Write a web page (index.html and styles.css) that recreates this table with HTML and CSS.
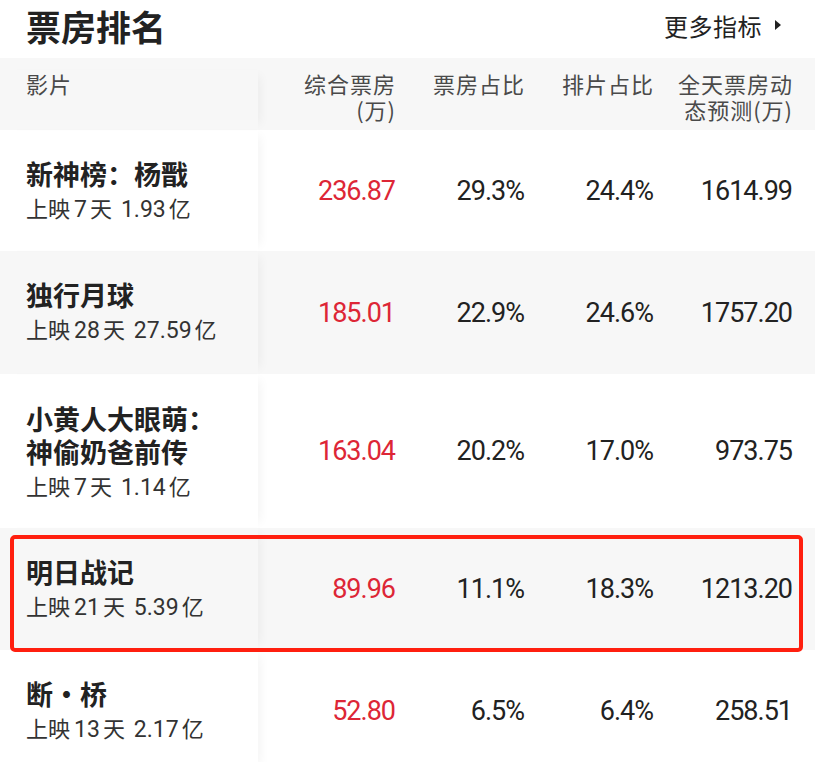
FILE: index.html
```html
<!DOCTYPE html>
<html lang="zh-CN">
<head>
<meta charset="utf-8">
<title>票房排名</title>
<link rel="stylesheet" href="styles.css">
</head>
<body>
<div class="page">
  <header class="top">
    <h1 class="title">票房排名</h1>
    <a class="more">更多指标<svg class="tri" width="8" height="12" viewBox="0 0 8 12"><path d="M1 1 L7 6 L1 11 Z" fill="#222"/></svg></a>
  </header>
  <div class="table">
    <div class="row head">
      <div class="cell name-col"><span class="hl">影片</span></div>
      <div class="cell num"><span class="hl">综合票房</span><span class="hl">(万)</span></div>
      <div class="cell num"><span class="hl">票房占比</span></div>
      <div class="cell num"><span class="hl">排片占比</span></div>
      <div class="cell num"><span class="hl">全天票房动</span><span class="hl">态预测(万)</span></div>
    </div>
    <div class="row">
      <div class="cell name-col"><div class="name">新神榜：杨戬</div><div class="sub">上映<span class="d">7</span>天 <span class="d">1.93</span>亿</div></div>
      <div class="cell num val red">236.87</div>
      <div class="cell num val">29.3%</div>
      <div class="cell num val">24.4%</div>
      <div class="cell num val">1614.99</div>
    </div>
    <div class="row alt">
      <div class="cell name-col"><div class="name">独行月球</div><div class="sub">上映<span class="d">28</span>天 <span class="d">27.59</span>亿</div></div>
      <div class="cell num val red">185.01</div>
      <div class="cell num val">22.9%</div>
      <div class="cell num val">24.6%</div>
      <div class="cell num val">1757.20</div>
    </div>
    <div class="row tall">
      <div class="cell name-col"><div class="name narrow">小黄人大眼萌：神偷奶爸前传</div><div class="sub">上映<span class="d">7</span>天 <span class="d">1.14</span>亿</div></div>
      <div class="cell num val red">163.04</div>
      <div class="cell num val">20.2%</div>
      <div class="cell num val">17.0%</div>
      <div class="cell num val">973.75</div>
    </div>
    <div class="row alt highlight">
      <div class="cell name-col"><div class="name">明日战记</div><div class="sub">上映<span class="d">21</span>天 <span class="d">5.39</span>亿</div></div>
      <div class="cell num val red">89.96</div>
      <div class="cell num val">11.1%</div>
      <div class="cell num val">18.3%</div>
      <div class="cell num val">1213.20</div>
    </div>
    <div class="row">
      <div class="cell name-col"><div class="name">断·桥</div><div class="sub">上映<span class="d">13</span>天 <span class="d">2.17</span>亿</div></div>
      <div class="cell num val red">52.80</div>
      <div class="cell num val">6.5%</div>
      <div class="cell num val">6.4%</div>
      <div class="cell num val">258.51</div>
    </div>
  </div>
</div>
</body>
</html>
```

FILE: styles.css
```css
* { box-sizing: border-box; }
html, body { margin: 0; padding: 0; background: #fff; }
body {
  font-family: "Noto Sans CJK SC", "Noto Sans", sans-serif;
  color: #222;
  width: 815px;
  height: 762px;
  overflow: hidden;
}
.top {
  height: 58px;
  display: flex;
  align-items: center;
  justify-content: space-between;
  padding: 0 31px 0 26px;
}
.title {
  margin: 0;
  font-size: 35px;
  font-weight: 700;
  line-height: 1;
  color: #222;
  position: relative;
  top: -4px;
}
.more {
  font-size: 24px;
  letter-spacing: 0.5px;
  color: #222;
  display: flex;
  align-items: center;
  gap: 12px;
  position: relative;
  top: -4px;
  margin-right: 2px;
}
.tri { display: block; }
.row {
  display: grid;
  grid-template-columns: 258px 137px 129px 129px 139px;
  padding-right: 23px;
  align-items: center;
  background: #fff;
}
.row.alt, .row.head { background: #f7f7f7; }
.row.head {
  height: 72px;
  align-items: start;
  padding-top: 12px;
  font-size: 22px;
  letter-spacing: 1px;
  color: #4a4a4a;
}
.hl {
  display: block;
  height: 26px;
  line-height: 26px;
}
.row.head .num { margin-right: -1px; }
.name-col {
  padding-left: 26px;
  align-self: stretch;
  box-shadow: 8px 0 10px -6px rgba(0, 0, 0, 0.05);
}
.row:not(.head) .name-col { padding-top: 27px; padding-bottom: 26px; }
.row.alt .name-col { padding-bottom: 28px; }
.row.tall .name-col { padding-top: 28px; padding-bottom: 25px; }
.row.highlight .name-col { padding-bottom: 27px; }
.num { text-align: right; }
.name {
  font-size: 27px;
  font-weight: 700;
  line-height: 33px;
  color: #222;
}
.name.narrow { width: 196px; }
.sub {
  font-size: 22px;
  line-height: 35px;
  height: 35px;
  color: #333;
  white-space: nowrap;
}
.sub .d {
  font-family: Roboto, "Noto Sans", sans-serif;
  font-size: 23px;
  line-height: 0;
  margin: 0 3px 0 4px;
}
.val {
  font-family: Roboto, "Noto Sans", sans-serif;
  font-size: 27px;
  letter-spacing: -1px;
  color: #222;
}
.val.red { color: #dd2636; }
.highlight { position: relative; }
.highlight::after {
  content: "";
  position: absolute;
  left: 10px;
  right: 12px;
  top: 7px;
  bottom: -2px;
  border: 4px solid #ff1f0f;
  border-radius: 5px;
  pointer-events: none;
}
```
